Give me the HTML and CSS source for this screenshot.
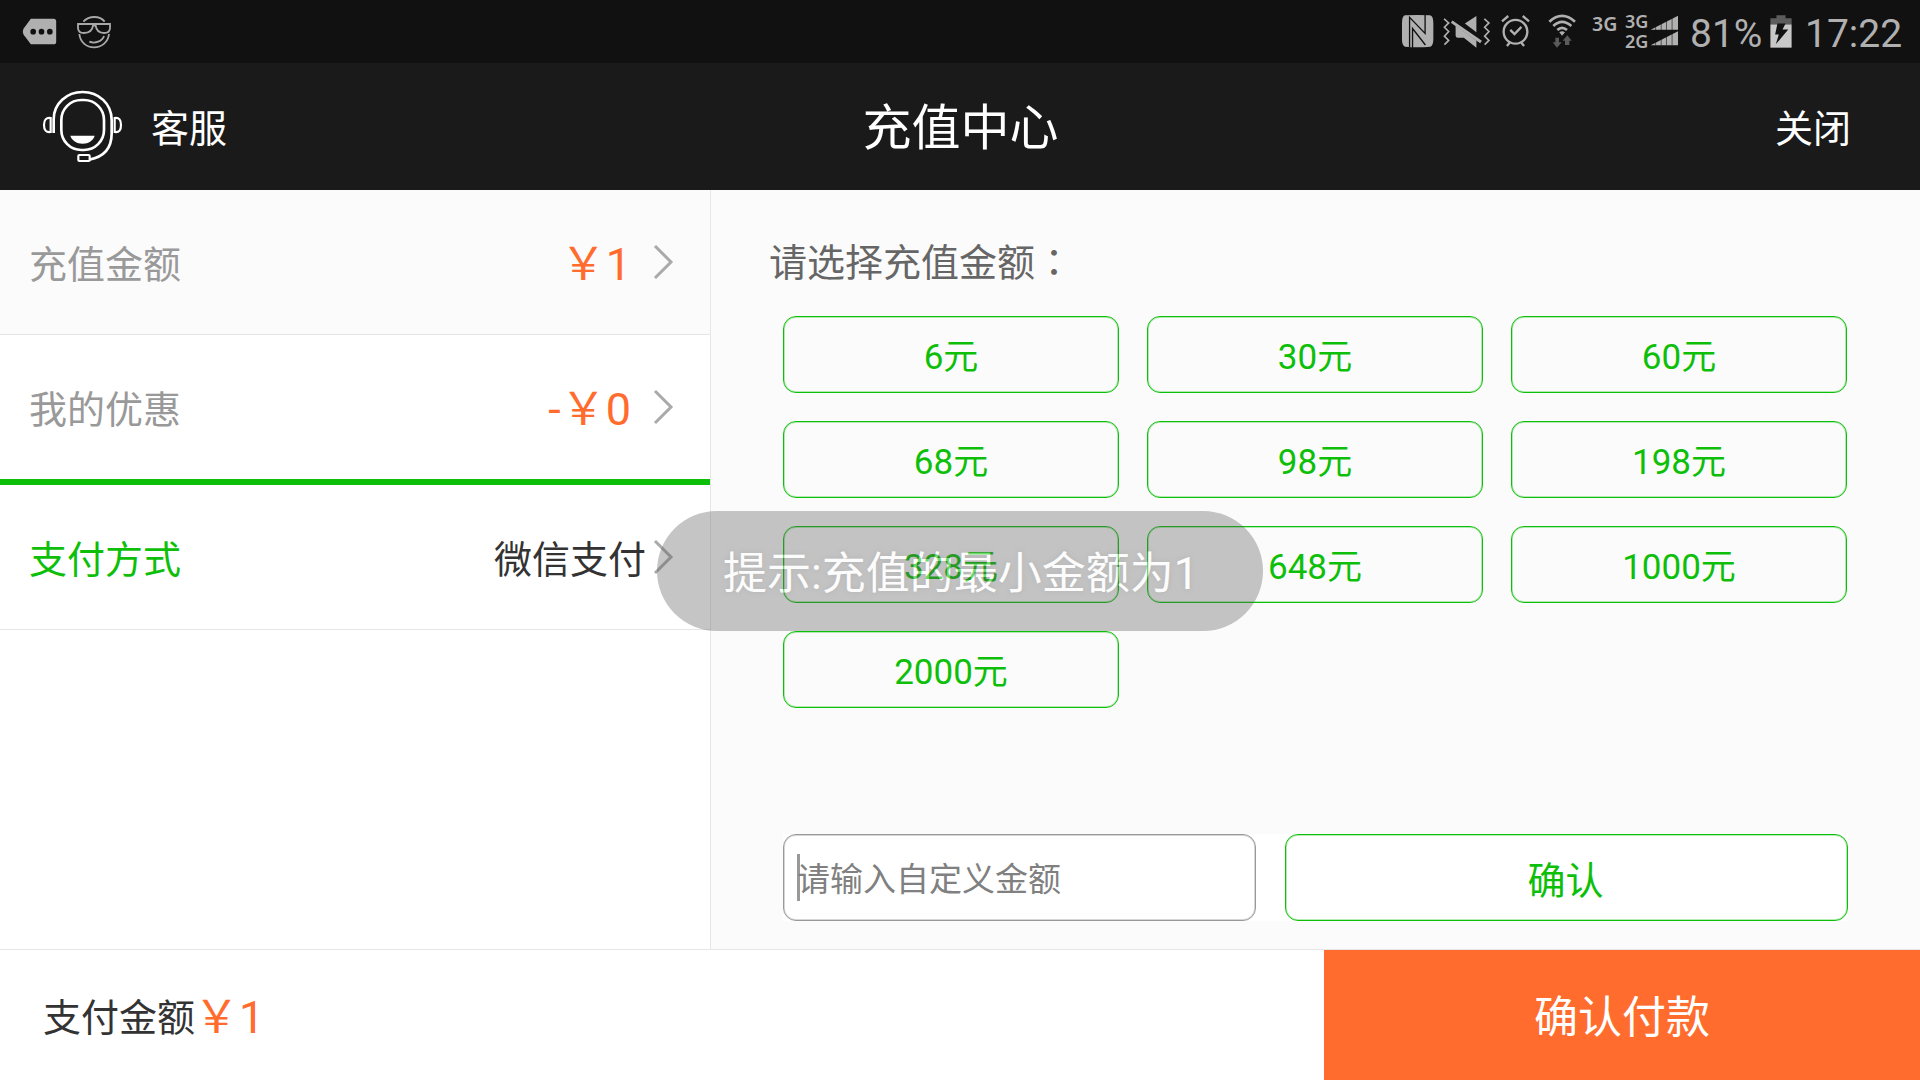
FILE: index.html
```html
<!DOCTYPE html>
<html lang="zh-CN">
<head>
<meta charset="utf-8">
<title>充值中心</title>
<link rel="stylesheet" href="styles.css">
</head>
<body>
<div class="screen">
  <div class="status">
    <svg class="s-msg" viewBox="66 54 104 81"><path fill="#b0b0b0" d="M92 56H160Q168 56 168 64V125Q168 133 160 133H92L71 105Q65 95 71 85Z"/><g fill="#111"><circle cx="99" cy="95" r="8.5"/><circle cx="124" cy="95" r="8.5"/><circle cx="149" cy="95" r="8.5"/></g></svg>
    <svg class="s-face" viewBox="228 44 108 102" fill="none" stroke="#a8a8a8" stroke-width="5.5"><path d="M250 64Q263 50 283 50T314 64M238 101C241 127 260 141 282 141S324 127 327 101"/><path d="M234 71H330V82C330 94 323 98 312 98C298 98 289 91 287 76H279C277 91 266 98 252 98C240 98 234 93 234 82ZM268 124C285 131 307 123 312 107"/></svg>
    <span class="grow"></span>
    <svg class="s-nfc" viewBox="63 45 98 100"><path fill="#b0b0b0" d="M74 46Q110 44 150 46Q160 48 160 70V118Q160 138 151 141Q112 145 74 141Q65 138 65 120V70Q65 48 74 46Z"/><path d="M88 143V52L135 101V44M136 136L97 86V144" fill="none" stroke="#111" stroke-width="4"/></svg>
    <svg class="s-mute" viewBox="190 50 142 94"><g fill="none" stroke="#b0b0b0" stroke-width="5"><path d="M193 56L207 68L194 81L207 94L194 108L207 121L194 134M315 56L329 68L316 81L329 94L316 108L329 121L316 134"/><path d="M216 64L305 126" stroke-width="9"/></g><path fill="#b0b0b0" d="M256 70L291 47V96ZM228 76L291 121V143L253 113H235Q228 113 228 106Z"/></svg>
    <svg class="s-alarm" viewBox="362 46 88 97" fill="none" stroke="#b0b0b0" stroke-width="7"><circle cx="406" cy="97" r="36"/><path d="M390 91L403 104L424 82M365 65L384 49M447 65L428 49M388 130L380 140M424 130L432 140"/></svg>
    <svg class="s-wifi" viewBox="505 43 84 102"><g fill="none" stroke="#b0b0b0" stroke-width="8"><path d="M509 66Q547 31 586 66M521 79Q547 54 575 79M533 91Q547 78 562 91"/></g><path fill="#b0b0b0" d="M539 98Q547 92 556 98L547 108Z"/><path fill="#5b5b5b" d="M527 114H538V128H546L532 144L519 128H527ZM556 136V123H549L563 107L576 123H569V136Z"/></svg>
    <span class="net">3G</span>
    <span class="nets"><span>3G</span><span>2G</span></span>
    <svg class="s-sig" viewBox="30 46 88 94"><path fill="#b0b0b0" d="M32 91L115 48V91ZM32 138L115 95V138Z"/><path d="M47 48V138M64 48V138M80 48V138M97 48V138" stroke="#111" stroke-opacity=".6" stroke-width="3"/></svg>
    <span class="pct">81%</span>
    <svg class="s-bat" viewBox="392 44 65 98"><path fill="#5c5c5c" d="M393 54H411V45H438V54H456V72H393Z"/><path fill="#c8c8c8" d="M393 72H456V141H393Z"/><path fill="#111" d="M414 69H438L429 87H446L409 131L418 102H407Z"/></svg>
    <span class="time">17:22</span>
  </div>

  <header class="header">
    <div class="service">
      <svg class="headset" viewBox="126 270 243 219" fill="none" stroke="#fff" stroke-width="6.5"><path d="M161 399V358C161 311 200 276 248 276S335 311 335 360V400C335 443 312 471 268 479" stroke-width="8"/><rect x="184" y="300" width="128" height="150" rx="60" stroke-width="8"/><path d="M152 354C138 352 132 360 132 375S138 398 152 396ZM344 354C358 352 363 360 363 375S358 398 344 396Z"/><rect x="235" y="465" width="34" height="18" rx="3"/><path d="M211 407H284C280 421 266 431 248 431S215 421 211 407Z" fill="#fff" stroke="none"/></svg>
      <span>客服</span>
    </div>
    <h1 class="title">充值中心</h1>
    <span class="close">关闭</span>
  </header>

  <main class="main">
    <nav class="side">
      <div class="row selected"><span>充值金额</span><span class="price">￥1</span><svg class="chev" viewBox="0 0 22 36"><path d="M2 2L18 18L2 34"/></svg></div>
      <div class="row"><span>我的优惠</span><span class="price">-￥0</span><svg class="chev" viewBox="0 0 22 36"><path d="M2 2L18 18L2 34"/></svg></div>
      <div class="row method"><span>支付方式</span><span class="pay">微信支付</span><svg class="chev" viewBox="0 0 22 36"><path d="M2 2L18 18L2 34"/></svg></div>
    </nav>
    <section class="panel">
      <p class="prompt">请选择充值金额<span class="colon" lang="zh-TW">：</span></p>
      <div class="amounts">
        <button>6元</button><button>30元</button><button>60元</button>
        <button>68元</button><button>98元</button><button>198元</button>
        <button>328元</button><button>648元</button><button>1000元</button>
        <button>2000元</button>
      </div>
      <div class="custom">
        <div class="field"><span class="caret"></span><span class="hint">请输入自定义金额</span></div>
        <button class="ok">确认</button>
      </div>
    </section>
  </main>

  <footer class="footer">
    <div class="total"><span>支付金额</span><span class="price">￥1</span></div>
    <button class="submit">确认付款</button>
  </footer>
  <div class="toast">提示:充值的最小金额为1</div>
</div>
</body>
</html>
```
FILE: styles.css
```css
* { box-sizing: border-box; margin: 0; padding: 0; }
body { font-family: Roboto, "Noto Sans CJK SC", sans-serif; font-size: 38px; line-height: 56px; color: #333; }
button { font: inherit; background: none; border: 0; padding-top: 6px; }
svg { display: block; flex: none; overflow: visible; }
.screen { position: relative; width: 1920px; height: 1080px; display: flex; flex-direction: column; overflow: hidden; background: #fff; }

.status { height: 63px; display: flex; align-items: flex-start; padding: 0 18px 0 22px; background: #111; color: #b0b0b0; }
.grow { flex: 1; }
.s-msg { width: 35px; height: 27px; margin-top: 18px; }
.s-face { width: 36px; height: 34px; margin: 15px 0 0 19px; }
.s-nfc { width: 33px; height: 33px; margin-top: 15px; }
.s-mute { width: 47px; height: 31px; margin: 17px 0 0 9px; }
.s-alarm { width: 29px; height: 32px; margin: 15px 0 0 11px; }
.s-wifi { width: 28px; height: 34px; margin: 14px 0 0 18px; }
.net, .nets { font-family: "Noto Sans", "Open Sans", sans-serif; font-weight: 600; }
.net { width: 24px; margin: 13px 0 0 16px; font-size: 19.5px; line-height: 22px; }
.nets { display: flex; flex-direction: column; width: 24px; margin: 11px 0 0 9px; font-size: 18px; line-height: 20px; }
.s-sig { width: 29px; height: 31px; margin: 15px 0 0 1px; }
.pct, .time { font-size: 39px; line-height: 46px; margin-top: 11px; white-space: nowrap; }
.pct { width: 72px; margin-left: 11px; }
.s-bat { width: 22px; height: 33px; margin: 15px 0 0 8px; }
.time { width: 97px; margin-left: 13px; }

.header { height: 127px; display: grid; grid-template-columns: 1fr auto 1fr; align-items: center; padding: 0 69px 0 42px; background: #1a1a1a; color: #fff; }
.service { display: flex; align-items: center; gap: 28px; }
.service span, .close { padding-top: 4px; }
.title { padding-top: 5px; }
.headset { width: 81px; height: 73px; }
.title { font-size: 49px; font-weight: 400; line-height: 72px; margin: 0 -14px 0 14px; }
.close { justify-self: end; }

.main { flex: 1; display: flex; border-bottom: 1px solid #e6e6e6; }
.side { width: 711px; border-right: 1px solid #e6e6e6; }
.row { height: 145px; display: flex; align-items: center; padding: 0 35px 0 29px; border-bottom: 1px solid #e6e6e6; color: #999; }
.row > span { padding-top: 6px; }
.total span { padding-top: 5px; }
.row.selected { background: #fbfbfb; }
.row.method { height: 151px; border-top: 6px solid #0ebf0a; margin-top: -1px; color: #0ebf0a; }
.price { font-size: 45px; color: #ff6c2d; }
.row .price { margin: 0 22px 0 auto; }
.row .pay { margin: 0 7px 0 auto; color: #333; }
.chev { width: 22px; height: 36px; fill: none; stroke: #aaa; stroke-width: 3; }

.panel { flex: 1; display: flex; flex-direction: column; background: #fbfbfb; padding: 45px 72px 28px 72px; }
.prompt { margin: 0 0 25px -14px; color: #666; }
.colon { font-family: "Noto Sans CJK TC", sans-serif; line-height: 1; }
.amounts { display: grid; grid-template-columns: repeat(3, 336px); grid-auto-rows: 77px; gap: 28px; }
.amounts button { font-size: 35px; }
.amounts button, .ok { border: 1px solid #0ebf0a; border-radius: 13px; box-shadow: inset 0 0 0 1px rgba(14, 191, 10, .3); color: #0ebf0a; }
.custom { width: 1065px; height: 87px; display: flex; gap: 29px; margin-top: auto; background: #fff; }
.field { width: 473px; display: flex; align-items: center; padding-left: 13px; border: 1px solid #999; border-radius: 13px; box-shadow: inset 0 0 0 1px rgba(153, 153, 153, .4); font-size: 33px; color: #808080; }
.hint { padding-top: 5px; }
.caret { width: 3px; height: 47px; margin-right: -3px; background: #999; }
.ok { flex: 1; padding-right: 2px; }

.footer { height: 130px; display: flex; justify-content: space-between; }
.total { display: flex; align-items: center; padding-left: 43px; }
.total .price { margin-left: -1px; }
.submit { width: 596px; background: #ff6c2d; color: #fff; font-size: 44px; }

.toast { position: absolute; left: 657px; top: 511px; width: 606px; height: 120px; border-radius: 60px; padding: 3px 0 0 66px; background: rgba(91, 91, 91, .87); opacity: .4; color: #fff; font-size: 44px; line-height: 120px; white-space: nowrap; text-shadow: 0 0 5px rgba(0, 0, 0, .35); }
```
